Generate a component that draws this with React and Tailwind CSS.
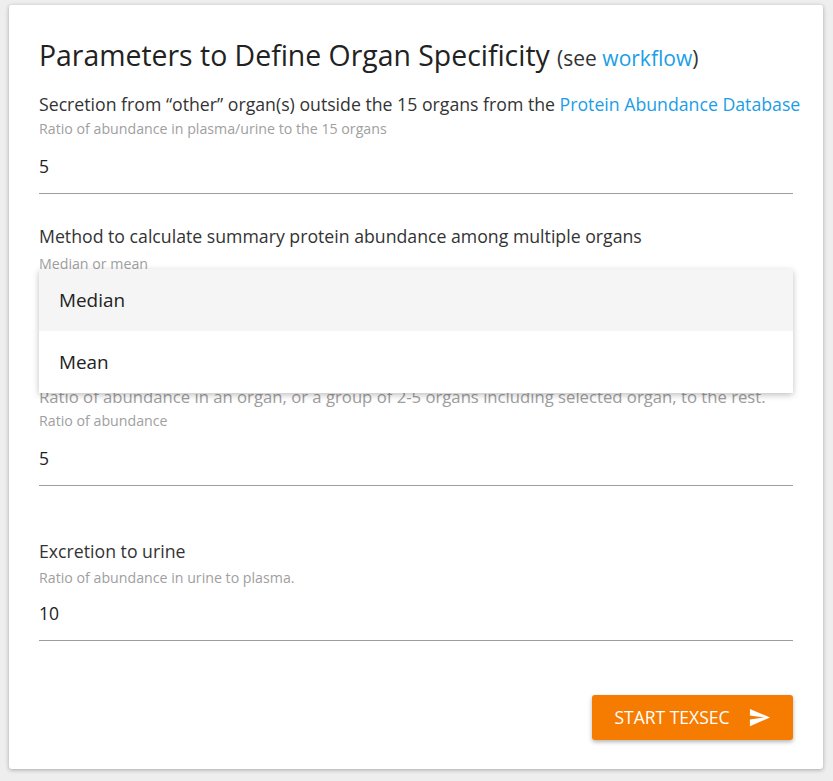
import { useState } from "react";

const font = { fontFamily: '"Open Sans", "Noto Sans", sans-serif' };

function Label({ children, className = "" }) {
  return (
    <div className={"text-[17.7px] leading-[22px] text-[#333] " + className}>
      {children}
    </div>
  );
}

function Helper({ children, className = "" }) {
  return (
    <div className={"text-[14.2px] leading-[16px] text-[#a0a0a0] " + className}>
      {children}
    </div>
  );
}

function NumberInput({ value, className = "" }) {
  return (
    <div
      className={
        "h-[48px] pt-[8px] pb-[15px] border-b border-[#9e9e9e] text-[17.5px] leading-[24px] text-[#222] " +
        className
      }
    >
      {value}
    </div>
  );
}

function SendIcon() {
  return (
    <svg width="23" height="23" viewBox="0 0 24 24" fill="white">
      <path d="M2.01 21L23 12 2.01 3 2 10l15 2-15 2z" />
    </svg>
  );
}

export default function App() {
  const [method, setMethod] = useState("Median");

  return (
    <div className="min-h-screen bg-[#eeeeee] pt-[5px] pl-[9px]" style={font}>
      <div className="w-[814px] h-[764px] bg-white rounded-[3px] shadow-[0_1px_4px_rgba(0,0,0,0.3)] px-[30px] pt-[34px]">
        <h1 className="text-[28.4px] leading-[32px] text-[#222] whitespace-nowrap">
          Parameters to Define Organ Specificity{" "}
          <span className="text-[21px] text-[#333]">
            (see <a className="text-[#1a9ee6]">workflow</a>)
          </span>
        </h1>

        <Label className="mt-[19px] whitespace-nowrap">
          Secretion from “other” organ(s) outside the 15 organs from the{" "}
          <a className="text-[#1a9ee6]">Protein Abundance Database</a>
        </Label>
        <Helper className="mt-[6px]">Ratio of abundance in plasma/urine to the 15 organs</Helper>
        <NumberInput value="5" className="mt-[9px]" />

        <div className="relative">
          <Label className="mt-[31px]">
            Method to calculate summary protein abundance among multiple organs
          </Label>
          <Helper className="mt-[9px]">Median or mean</Helper>
          <div className="mt-[5px] h-[48px] border-b border-[#9e9e9e]" data-value={method} />

          <div className="mt-[32px] h-[22px]" />
          <div className="mt-[7px] text-[16.7px] leading-[22px] text-[#9e9e9e] whitespace-nowrap">
            Ratio of abundance in an organ, or a group of 2-5 organs including selected organ, to the rest.
          </div>
          <Helper className="mt-[5px]">Ratio of abundance</Helper>
          <NumberInput value="5" className="mt-[9px]" />

          <div className="absolute left-0 right-0 top-[44px] bg-white shadow-[0_2px_6px_rgba(0,0,0,0.25)] rounded-[2px]">
            {["Median", "Mean"].map((opt) => (
              <div
                key={opt}
                onClick={() => setMethod(opt)}
                className={
                  "h-[62px] flex items-center pl-[20px] text-[18.9px] text-[#222] " +
                  (opt === "Median" ? "bg-[#f5f5f5]" : "bg-white")
                }
              >
                {opt}
              </div>
            ))}
          </div>
        </div>

        <Label className="mt-[54px]">Excretion to urine</Label>
        <Helper className="mt-[8px]">Ratio of abundance in urine to plasma.</Helper>
        <NumberInput value="10" className="mt-[7px]" />

        <div className="flex justify-end mt-[54px]">
          <button className="w-[201px] h-[45px] bg-[#f57c00] rounded-[3px] shadow-[0_2px_4px_rgba(0,0,0,0.3)] flex items-center justify-center gap-[18px] text-white text-[17.5px]">
            <span>START TEXSEC</span>
            <SendIcon />
          </button>
        </div>
      </div>
    </div>
  );
}
